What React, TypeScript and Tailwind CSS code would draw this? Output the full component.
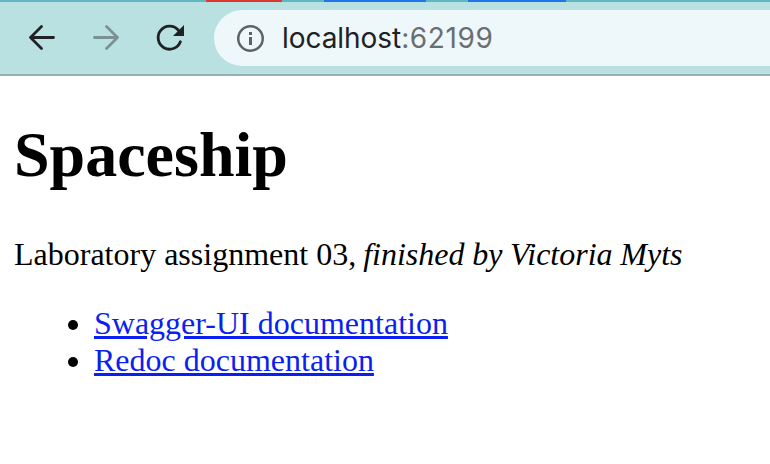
function TabStrip() {
  return (
    <div className="flex h-[2px] bg-[#5fb7bf]">
      <div className="ml-[206px] w-[76px] bg-[#dd3730]" />
      <div className="ml-[42px] w-[102px] bg-[#1f76e8]" />
      <div className="ml-[42px] w-[98px] bg-[#1f76e8]" />
    </div>
  );
}

function BackIcon() {
  return (
    <svg className="h-[32px] w-[32px]" viewBox="0 0 32 32" fill="none" stroke="#202124" strokeWidth="2.8" strokeLinecap="round" strokeLinejoin="round">
      <path d="M27.5 15.5H4.5M15.5 4.5L4.5 15.5L15.5 26.5" />
    </svg>
  );
}

function ForwardIcon() {
  return (
    <svg className="h-[32px] w-[32px]" viewBox="0 0 32 32" fill="none" stroke="#7b9295" strokeWidth="2.8" strokeLinecap="round" strokeLinejoin="round">
      <path d="M4.5 15.5H27.5M16.5 4.5L27.5 15.5L16.5 26.5" />
    </svg>
  );
}

function ReloadIcon() {
  return (
    <svg className="h-[32px] w-[32px]" viewBox="0 0 32 32" fill="none">
      <path d="M26.4 19.8A11.5 11.5 0 1 1 24.2 8" stroke="#202124" strokeWidth="2.8" strokeLinecap="round" />
      <path d="M30 3V14H19Z" fill="#202124" />
    </svg>
  );
}

function InfoIcon() {
  return (
    <svg className="h-[27px] w-[27px]" viewBox="0 0 27 27" fill="none">
      <circle cx="13.5" cy="13.5" r="12.25" stroke="#5f6368" strokeWidth="2.5" />
      <path d="M12 7h3v3h-3zM12 12h3v8h-3z" fill="#5f6368" />
    </svg>
  );
}

export default function App() {
  return (
    <div className="h-[464px] w-[770px] overflow-hidden bg-white text-black">
      <TabStrip />
      <div className="flex h-[74px] items-center border-b-2 border-[#94b1b4] bg-[#b9e1e2]">
        <div className="flex gap-[32px] pl-[26px]">
          <BackIcon />
          <ForwardIcon />
          <ReloadIcon />
        </div>
        <div className="ml-[28px] flex h-[56px] flex-1 items-center rounded-l-full bg-[#eef7f9] pl-[23px]">
          <InfoIcon />
          <span className="ml-[18px] font-['Inter',sans-serif] text-[28px] leading-[32px] tracking-[-0.05px] text-[#202124]">
            localhost<span className="tracking-[0.6px] text-[#6a6e71]">:62199</span>
          </span>
        </div>
      </div>
      <main className="px-[14px] font-['Liberation_Serif',serif] text-[32px] leading-[37px]">
        <h1 className="pt-[42px] text-[64px] leading-[74px] font-bold">Spaceship</h1>
        <p className="mt-[44px]">
          Laboratory assignment 03, <em className="-ml-px [word-spacing:-0.3px]">finished by Victoria Myts</em>
        </p>
        <ul className="mt-[32px] list-disc pl-[80px]">
          <li>
            <a className="text-[#0b1ff0] underline decoration-[3px]">Swagger-UI documentation</a>
          </li>
          <li>
            <a className="text-[#0b1ff0] underline decoration-[3px]">Redoc documentation</a>
          </li>
        </ul>
      </main>
    </div>
  );
}
